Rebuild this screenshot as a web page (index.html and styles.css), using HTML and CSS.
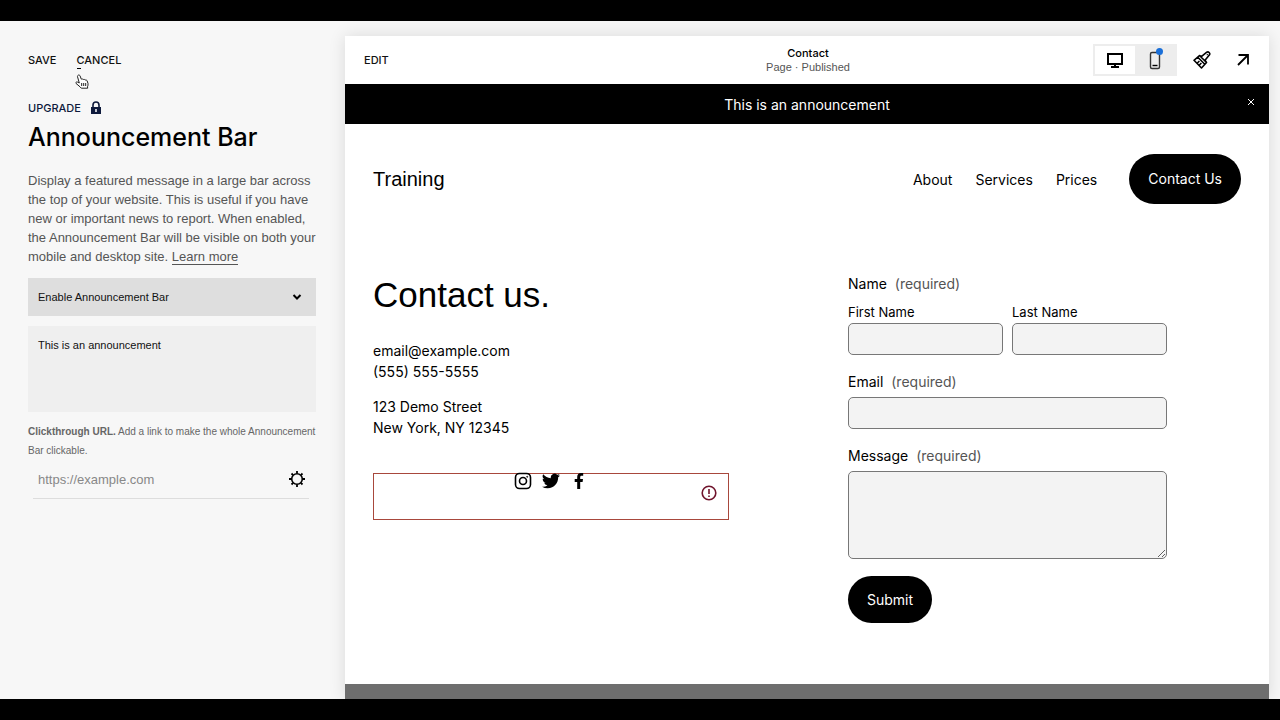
FILE: index.html
```html
<!DOCTYPE html>
<html lang="en">
<head>
    <meta charset="UTF-8">
    <meta name="viewport" content="width=device-width, initial-scale=1.0">
    <title>Announcement Bar</title>
    <link rel="stylesheet" href="styles.css">
</head>
<body>
    <div class="editor">
        <aside class="sidebar">
            <div class="actions">
                <button type="button" class="action">Save</button>
                <button type="button" class="action cancel">Cancel
                    <svg class="cursor" viewBox="0 0 14 16" width="14" height="16">
                        <path d="M3.2 1.2c.8-.5 1.6 0 1.9.8l1.2 3.2c.7-.5 1.5-.3 1.9.4.8-.5 1.6-.2 1.9.5.9-.4 1.8 0 2.1.9l.8 2.5c.3 1.3-.2 2.3-.5 3.3l.2 1.4H6.3L5 12.800 1 9.400c-.5-.8.3-1.8 1.3-1.4l2 1L2.600 3c-.3-.8 0-1.400.6-1.800z" fill="#fff" stroke="#222" stroke-width="1"/>
                        <path d="M6.700 9v3M8.700 9v3M10.700 9v3" stroke="#222" stroke-width="1"/>
                    </svg>
                </button>
            </div>
            <a href="#" class="upgrade">Upgrade
                <svg viewBox="0 0 12 14" width="12" height="14">
                    <path d="M3 6V4a3 3 0 0 1 6 0v2" fill="none" stroke="#0e1a3c" stroke-width="1.600"/>
                    <path d="M1 6h10v7H1z" fill="#0e1a3c"/>
                    <path d="M6 8v3" stroke="#fff" stroke-width="1.500"/>
                </svg>
            </a>
            <h1 class="title">Announcement Bar</h1>
            <p class="description">Display a featured message in a large bar across the top of your website. This is useful if you have new or important news to report. When enabled, the Announcement Bar will be visible on both your mobile and desktop site. <a href="#">Learn more</a></p>
            <div class="select-wrap">
                <select class="select" aria-label="Announcement bar status">
                    <option>Enable Announcement Bar</option>
                    <option>Disable Announcement Bar</option>
                </select>
                <svg class="chevron" viewBox="0 0 10 8" width="10" height="8">
                    <path d="M1.500 2L5 5.500 8.500 2" fill="none" stroke="#000" stroke-width="2"/>
                </svg>
            </div>
            <textarea class="announcement-text" aria-label="Announcement text">This is an announcement</textarea>
            <label class="url-label" for="url"><b>Clickthrough URL.</b> Add a link to make the whole Announcement Bar clickable.</label>
            <div class="url-row">
                <input class="url" id="url" type="text" placeholder="https://example.com">
                <button type="button" class="icon-button" aria-label="Link settings">
                    <svg viewBox="0 0 16 16" width="16" height="16" fill="none" stroke="#000">
                        <circle cx="8" cy="8" r="5.300" stroke-width="1.600"/>
                        <path d="M8 0v2.500M8 13.500V16M0 8h2.500M13.500 8H16M2.500 2.500l1.600 1.600M11.900 11.900l1.600 1.600M2.500 13.500l1.600-1.600M11.900 4.100l1.600-1.600" stroke-width="1.800"/>
                    </svg>
                </button>
            </div>
        </aside>

        <main class="preview">
            <div class="toolbar">
                <button type="button" class="action edit">Edit</button>
                <div class="page-info">
                    <span class="page-name">Contact</span>
                    <span>Page · Published</span>
                </div>
                <div class="tools">
                    <div class="devices">
                        <button type="button" class="device selected" aria-label="Desktop view">
                            <svg viewBox="0 0 18 18" width="18" height="18" fill="none" stroke="#000" stroke-width="2">
                                <path d="M2 3h14v10H2zM9 13v3M5 16h8"/>
                            </svg>
                        </button>
                        <button type="button" class="device" aria-label="Mobile view">
                            <svg viewBox="0 0 18 20" width="18" height="20">
                                <rect x="4.500" y="2.500" width="9" height="16" rx="1.500" fill="none" stroke="#333" stroke-width="1.400"/>
                                <path d="M6.500 15.500h5" stroke="#000" stroke-width="1.400"/>
                            </svg>
                            <span class="dot"></span>
                        </button>
                    </div>
                    <button type="button" class="icon-button" aria-label="Site styles">
                        <svg viewBox="0 0 18 18" width="18" height="18" fill="none" stroke="#000" stroke-width="1.600" stroke-linejoin="round">
                            <path d="M6.500 4.500l7 7M4.800 6.200l7 7M1 9.300l5.500-4.800 1.800 1.200 5.500-4.500c1.600-1 3.700 1 2.700 2.600l-4.500 5.400 1.500 2.300-5 5.500zM4.400 12l2-2M6.400 14l2-2M14 3.300l.6.600"/>
                        </svg>
                    </button>
                    <button type="button" class="icon-button" aria-label="Open site">
                        <svg viewBox="0 0 14 14" width="14" height="14" fill="none" stroke="#000" stroke-width="1.800">
                            <path d="M2 12L11.500 2.500M2.500 2H12v9.500"/>
                        </svg>
                    </button>
                </div>
            </div>

            <div class="announcement">
                <span>This is an announcement</span>
                <button type="button" class="close" aria-label="Close">
                    <svg viewBox="0 0 8 8" width="8" height="8"><path d="M1 1l6 6M7 1L1 7" stroke="#fff" stroke-width="1"/></svg>
                </button>
            </div>

            <header class="site-header">
                <a href="#" class="site-title">Training</a>
                <nav class="nav">
                    <a href="#">About</a>
                    <a href="#">Services</a>
                    <a href="#">Prices</a>
                    <a href="#" class="pill contact-button">Contact Us</a>
                </nav>
            </header>

            <section class="contact">
                <div class="contact-info">
                    <h2>Contact us.</h2>
                    <p>email@example.com<br>(555) 555-5555</p>
                    <p>123 Demo Street<br>New York, NY 12345</p>
                    <div class="social">
                        <a href="#" aria-label="Instagram">
                            <svg viewBox="0 0 18 18" width="18" height="18" fill="none" stroke="#000">
                                <rect x="1.500" y="1.500" width="15" height="15" rx="4" stroke-width="1.600"/>
                                <circle cx="9" cy="9" r="3.500" stroke-width="1.600"/>
                                <circle cx="13.200" cy="4.800" r=".5"/>
                            </svg>
                        </a>
                        <a href="#" aria-label="Twitter">
                            <svg viewBox="0 0 24 24" width="18" height="18">
                                <path d="M23.950 4.570a10 10 0 0 1-2.820.780 4.960 4.960 0 0 0 2.160-2.720 9.900 9.900 0 0 1-3.120 1.180 4.920 4.920 0 0 0-8.380 4.480C7.690 8.090 4.070 6.130 1.640 3.160a4.920 4.920 0 0 0 1.520 6.570 4.900 4.900 0 0 1-2.230-.610v.060a4.920 4.920 0 0 0 3.950 4.830 5 5 0 0 1-2.210.080 4.940 4.940 0 0 0 4.600 3.420A9.870 9.870 0 0 1 0 19.540a14 14 0 0 0 7.550 2.210c9.050 0 14-7.500 14-13.980 0-.210 0-.420-.010-.630a9.940 9.940 0 0 0 2.410-2.570z"/>
                            </svg>
                        </a>
                        <a href="#" aria-label="Facebook">
                            <svg viewBox="0 0 18 18" width="18" height="18">
                                <path d="M7.200 17V10H4.700V7.100h2.500V5c0-2.600 1.500-4 3.900-4 1 0 1.900.1 2.100.1v2.600h-1.500c-1.200 0-1.500.6-1.500 1.500v1.900H13l-.4 2.900h-2.400v7z"/>
                            </svg>
                        </a>
                        <svg class="warning" viewBox="0 0 16 16" width="16" height="16">
                            <circle cx="8" cy="8" r="6.800" fill="none" stroke="#70142c" stroke-width="1.600"/>
                            <path d="M8 4v5M8 10.500V12" stroke="#70142c" stroke-width="1.600"/>
                        </svg>
                    </div>
                </div>

                <form class="form">
                    <fieldset class="name">
                        <legend>Name <span class="required">(required)</span></legend>
                        <div class="name-fields">
                            <div class="field">
                                <label class="small-label" for="first">First Name</label>
                                <input id="first" type="text">
                            </div>
                            <div class="field">
                                <label class="small-label" for="last">Last Name</label>
                                <input id="last" type="text">
                            </div>
                        </div>
                    </fieldset>
                    <div class="field">
                        <label for="email">Email <span class="required">(required)</span></label>
                        <input id="email" type="email">
                    </div>
                    <div class="field">
                        <label for="message">Message <span class="required">(required)</span></label>
                        <textarea id="message"></textarea>
                    </div>
                    <button type="button" class="pill submit">Submit</button>
                </form>
            </section>
            <footer class="site-footer"></footer>
        </main>
    </div>
</body>
</html>
```
FILE: styles.css
```css
* {
    box-sizing: border-box;
}
body {
    margin: 0;
    padding: 21px 0;
    height: 100vh;
    overflow: hidden;
    background-color: #000;
    color: #000;
    font-family: Inter, "Liberation Sans", sans-serif;
}
button, input, select, textarea {
    font-family: inherit;
    margin: 0;
}
button {
    border: 0;
    padding: 0;
    background: none;
    cursor: pointer;
}
a {
    color: inherit;
    text-decoration: none;
}
svg {
    display: block;
}
.editor {
    display: flex;
    height: 100%;
    background-color: #f7f7f7;
    overflow: hidden;
}

/* sidebar */
.sidebar {
    width: 345px;
    flex-shrink: 0;
    padding: 30px 29px 0 28px;
    display: flex;
    flex-direction: column;
    font-family: "Liberation Sans", sans-serif;
}
.actions {
    display: flex;
    gap: 20px;
}
.action, .upgrade {
    font-family: Inter, sans-serif;
    font-size: 11px;
    line-height: 18px;
    font-weight: 500;
    text-transform: uppercase;
    color: #111;
}
.cancel {
    position: relative;
}
.cancel::after {
    content: "";
    position: absolute;
    left: 0;
    bottom: 0;
    width: 4px;
    height: 1px;
    background-color: #000;
}
.cursor {
    position: absolute;
    left: -2px;
    top: 23px;
}
.upgrade {
    display: flex;
    align-items: center;
    gap: 9px;
    margin-top: 30px;
    color: #0e1a3c;
}
.title {
    margin: 4px 0 18px;
    font-family: Inter, sans-serif;
    font-size: 25px;
    line-height: 32px;
    font-weight: 500;
}
.description {
    margin: 0;
    font-size: 13px;
    line-height: 19px;
    color: #555;
}
.description a {
    border-bottom: 1px solid #555;
}
.select-wrap {
    position: relative;
    margin-top: 12px;
}
.select {
    display: block;
    width: 100%;
    height: 38px;
    padding: 0 10px;
    border: 0;
    border-radius: 0;
    appearance: none;
    background-color: #dedede;
    font-size: 11px;
    color: #111;
}
.chevron {
    position: absolute;
    right: 14px;
    top: 15px;
}
.announcement-text {
    height: 86px;
    margin-top: 10px;
    padding: 10px;
    border: 0;
    resize: none;
    background-color: #efefef;
    font-size: 11px;
    line-height: 18px;
    color: #111;
}
.url-label {
    margin-top: 10px;
    font-size: 10px;
    line-height: 19px;
    color: #666;
}
.url-row {
    display: flex;
    align-items: center;
    height: 39px;
    margin: 0 7px 0 5px;
    padding-right: 4px;
    border-bottom: 1px solid #ddd;
}
.url {
    flex: 1;
    min-width: 0;
    padding: 0 5px;
    border: 0;
    background: none;
    font-size: 13px;
}
.url::placeholder {
    color: #888;
}

/* preview */
.preview {
    flex: 1;
    min-width: 0;
    margin: 15px 11px 0 0;
    display: flex;
    flex-direction: column;
    background-color: #fff;
    box-shadow: 0 0 16px rgba(0,0,0,0.12);
}
.toolbar {
    display: grid;
    grid-template-columns: 1fr auto 1fr;
    align-items: center;
    height: 48px;
    flex-shrink: 0;
    padding: 0 17px 0 19px;
}
.edit {
    justify-self: start;
}
.page-info {
    display: flex;
    flex-direction: column;
    align-items: center;
    font-family: "Liberation Sans", sans-serif;
    font-size: 11px;
    line-height: 14px;
    color: #555;
}
.page-name {
    font-family: Inter, sans-serif;
    font-weight: 500;
    color: #000;
}
.tools {
    justify-self: end;
    display: flex;
    align-items: center;
    gap: 16px;
}
.devices {
    display: flex;
    border: 2px solid #ededed;
}
.device {
    position: relative;
    width: 40px;
    height: 28px;
    display: flex;
    align-items: center;
    justify-content: center;
    background-color: #ededed;
}
.selected {
    background-color: #fff;
}
.dot {
    position: absolute;
    top: 2px;
    right: 12px;
    width: 7px;
    height: 7px;
    border-radius: 50%;
    background-color: #1a6fd8;
}
.tools .icon-button {
    width: 18px;
    height: 18px;
    display: flex;
    align-items: center;
    justify-content: center;
}
.tools .icon-button:last-child {
    margin-left: 7px;
}
.announcement {
    position: relative;
    display: flex;
    align-items: center;
    justify-content: center;
    height: 40px;
    flex-shrink: 0;
    background-color: #000;
    color: #fff;
    font-size: 14px;
}
.close {
    position: absolute;
    right: 14px;
    top: 14px;
}
.site-header {
    display: flex;
    align-items: center;
    justify-content: space-between;
    padding: 30px 28px;
}
.site-title {
    font-family: "Liberation Sans", sans-serif;
    font-size: 20px;
    line-height: 28px;
}
.nav {
    display: flex;
    align-items: center;
    gap: 23px;
    font-size: 14px;
}
.pill {
    border-radius: 25px;
    padding: 0 19px;
    background-color: #000;
    color: #fff;
    font-size: 14px;
}
.contact-button {
    margin-left: 9px;
    line-height: 50px;
}
.contact {
    display: grid;
    grid-template-columns: 356fr 319fr;
    column-gap: 119px;
    padding: 40px 102px 61px 28px;
}
.contact h2 {
    margin: 0 0 24px;
    font-family: "Liberation Sans", sans-serif;
    font-size: 35px;
    line-height: 42px;
    font-weight: 400;
}
.contact p {
    margin: 0 0 14px;
    font-size: 14px;
    line-height: 21px;
}
.social {
    position: relative;
    display: flex;
    justify-content: center;
    gap: 10px;
    height: 47px;
    margin-top: 35px;
    border: 1px solid #a8483c;
}
.social a {
    margin-top: -2px;
}
.warning {
    position: absolute;
    right: 11px;
    top: 11px;
}
.form {
    display: flex;
    flex-direction: column;
    gap: 17px;
    font-size: 14px;
    line-height: 20px;
}
.name {
    min-width: 0;
    margin: 0;
    padding: 0;
    border: 0;
}
.name legend {
    padding: 0;
}
.name-fields {
    display: grid;
    grid-template-columns: 1fr 1fr;
    gap: 9px;
    margin-top: 8px;
}
.field {
    display: flex;
    flex-direction: column;
    gap: 5px;
}
.name .field {
    gap: 1px;
}
.small-label {
    font-size: 13px;
}
.required {
    margin-left: 4px;
    color: #555;
}
.form input, .form textarea {
    display: block;
    width: 100%;
    height: 32px;
    padding: 0 8px;
    border: 1px solid #777;
    border-radius: 5px;
    background-color: #f3f3f3;
}
.form textarea {
    height: 88px;
}
.submit {
    align-self: flex-start;
    height: 47px;
}
.site-footer {
    flex: 1;
    background-color: #6e6e6e;
}
```
